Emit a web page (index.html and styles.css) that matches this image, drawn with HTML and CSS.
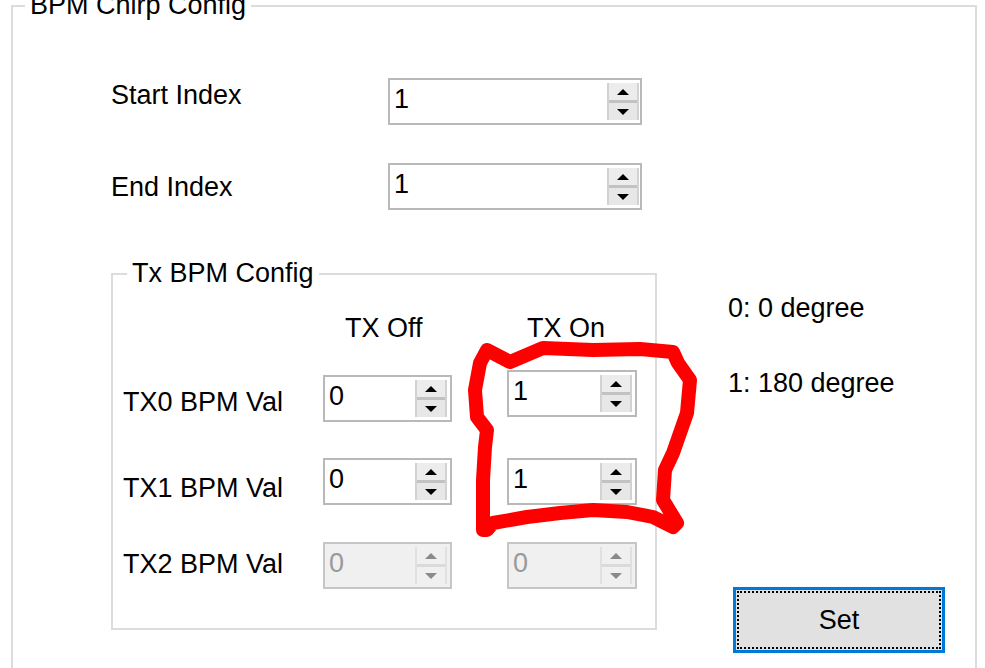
FILE: index.html
```html
<!DOCTYPE html>
<html lang="en">
<head>
    <meta charset="UTF-8">
    <meta name="viewport" content="width=device-width, initial-scale=1.0">
    <title>BPM Chirp Config</title>
    <link rel="stylesheet" href="styles.css">
</head>
<body>
    <!-- Outer group box -->
    <fieldset class="group group-main">
        <legend>BPM Chirp Config</legend>

        <div class="main-body">
            <div class="field-row row-start">
                <label class="field-label">Start Index</label>
                <div class="spin spin-wide">
                    <span class="spin-value">1</span>
                    <span class="spin-btns"><span class="spin-up"></span><span class="spin-down"></span></span>
                </div>
            </div>

            <div class="field-row row-end">
                <label class="field-label label-end">End Index</label>
                <div class="spin spin-wide">
                    <span class="spin-value">1</span>
                    <span class="spin-btns"><span class="spin-up"></span><span class="spin-down"></span></span>
                </div>
            </div>

            <div class="bottom-area">
                <!-- Tx BPM group box -->
                <fieldset class="group group-tx">
                    <legend>Tx BPM Config</legend>

                    <div class="tx-body">
                        <div class="bpm-row bpm-head">
                            <span></span>
                            <span class="head-off">TX Off</span>
                            <span class="head-on">TX On</span>
                        </div>

                        <div class="bpm-row row-tx0">
                            <span class="bpm-label">TX0 BPM Val</span>
                            <div class="spin">
                                <span class="spin-value">0</span>
                                <span class="spin-btns"><span class="spin-up"></span><span class="spin-down"></span></span>
                            </div>
                            <div class="spin spin-raised">
                                <span class="spin-value">1</span>
                                <span class="spin-btns"><span class="spin-up"></span><span class="spin-down"></span></span>
                            </div>
                        </div>

                        <div class="bpm-row row-tx1">
                            <span class="bpm-label">TX1 BPM Val</span>
                            <div class="spin">
                                <span class="spin-value">0</span>
                                <span class="spin-btns"><span class="spin-up"></span><span class="spin-down"></span></span>
                            </div>
                            <div class="spin">
                                <span class="spin-value">1</span>
                                <span class="spin-btns"><span class="spin-up"></span><span class="spin-down"></span></span>
                            </div>
                        </div>

                        <div class="bpm-row row-tx2">
                            <span class="bpm-label">TX2 BPM Val</span>
                            <div class="spin is-disabled">
                                <span class="spin-value">0</span>
                                <span class="spin-btns"><span class="spin-up"></span><span class="spin-down"></span></span>
                            </div>
                            <div class="spin is-disabled">
                                <span class="spin-value">0</span>
                                <span class="spin-btns"><span class="spin-up"></span><span class="spin-down"></span></span>
                            </div>
                        </div>
                    </div>
                </fieldset>

                <!-- Legend + Set button -->
                <div class="side">
                    <p class="side-note note-0">0: 0 degree</p>
                    <p class="side-note note-1">1: 180 degree</p>
                    <button class="set-btn">Set</button>
                </div>
            </div>
        </div>
    </fieldset>

    <!-- Red hand drawn mark over the TX On column -->
    <svg class="scribble" width="985" height="668" viewBox="0 0 985 668">
        <path d="M487,350 L510,362 L543,348 L593,350 L640,349 L673,352 L678,363 L690,380 L687,413 L673,453 L665,470 L663,500 L677,523 L673,527 L653,517 L627,512 L593,510 L560,513 L527,517 L493,523 L487,530 L483,530 L483,480 L485,447 L487,430 L477,417 L475,390 L480,363 Z"
              fill="none" stroke="#ff0000" stroke-width="14" stroke-linejoin="round" stroke-linecap="round"/>
    </svg>
</body>
</html>
```

FILE: styles.css
```css
/* Page */
html, body {
    margin: 0;
    padding: 0;
    background: #ffffff;
    overflow: hidden;
}

body {
    font-family: "Liberation Sans", Arial, sans-serif;
    font-size: 27px;
    line-height: 31px;
    color: #000000;
}

/* Group boxes */
.group {
    box-sizing: border-box;
    margin: 0;
    padding: 0;
    border: 2px solid #dcdcdc;
    min-width: 0;
}

.group legend {
    padding: 0 5px;
    line-height: 31px;
}

.group-main {
    width: 966px;
    height: 720px;
    margin: -10px 0 0 11px;
    border-bottom: none;
}

.group-main > legend {
    margin-left: 12px;
}

.main-body {
    padding-left: 98px;
}

.group-tx {
    width: 546px;
}

.group-tx > legend {
    margin-left: 14px;
}

.tx-body {
    padding: 0 0 39px 10px;
}

/* Index rows */
.field-row {
    display: flex;
    align-items: flex-start;
    height: 47px;
}

.row-start {
    margin-top: 57px;
}

.row-end {
    margin-top: 38px;
}

.field-label {
    width: 277px;
    margin-top: 2px;
}

.label-end {
    margin-top: 9px;
}

/* Spin boxes */
.spin {
    box-sizing: border-box;
    width: 129px;
    height: 47px;
    border: 2px solid #b9b9b9;
    background: #ffffff;
    display: flex;
    align-items: center;
    justify-content: space-between;
    padding: 0 3px 0 4px;
}

.spin-wide {
    width: 254px;
    padding-right: 1px;
}

.spin-value {
    align-self: flex-start;
    margin-top: 4px;
}

.spin-btns {
    box-sizing: border-box;
    width: 32px;
    height: 37px;
    display: flex;
    flex-direction: column;
    border: 2px solid #d2d2d2;
    border-top: none;
    border-bottom: none;
    background: #e7e7e7;
}

.spin-up,
.spin-down {
    flex: 1;
    display: flex;
    align-items: center;
    justify-content: center;
}

.spin-up {
    background: #ececec;
    border-bottom: 3px solid #c2c2c2;
}

.spin-up::before {
    content: "";
    border-left: 6px solid transparent;
    border-right: 6px solid transparent;
    border-bottom: 6px solid #000000;
}

.spin-down::before {
    content: "";
    border-left: 6px solid transparent;
    border-right: 6px solid transparent;
    border-top: 6px solid #000000;
}

.spin.is-disabled {
    background: #f0f0f0;
    border-color: #c6c6c6;
    color: #9a9a9a;
}

.is-disabled .spin-btns,
.is-disabled .spin-up {
    background: #f0f0f0;
}

.is-disabled .spin-up {
    border-bottom-color: #dadada;
}

.is-disabled .spin-btns {
    border-color: #e0e0e0;
}

.is-disabled .spin-up::before {
    border-bottom-color: #8a8a8a;
}

.is-disabled .spin-down::before {
    border-top-color: #8a8a8a;
}

/* Tx BPM grid */
.bottom-area {
    display: flex;
    align-items: flex-start;
    margin-top: 48px;
}

.bpm-row {
    display: grid;
    grid-template-columns: 200px 184px 130px;
    align-items: start;
}

.bpm-row .spin:last-child {
    width: 130px;
}

.bpm-head {
    margin-top: 24px;
}

.head-off {
    padding-left: 22px;
}

.head-on {
    padding-left: 20px;
}

.row-tx0 {
    margin-top: 31px;
}

.row-tx0 .bpm-label {
    margin-top: 12px;
}

.spin-raised {
    margin-top: -5px;
}

.row-tx1 {
    margin-top: 36px;
}

.row-tx1 .bpm-label {
    margin-top: 15px;
}

.row-tx2 {
    margin-top: 37px;
}

.row-tx2 .bpm-label {
    margin-top: 7px;
}

/* Right side */
.side {
    margin-left: 71px;
}

.side-note {
    margin: 0;
}

.note-0 {
    margin-top: 35px;
}

.note-1 {
    margin-top: 44px;
}

.set-btn {
    display: block;
    box-sizing: border-box;
    width: 212px;
    height: 66px;
    margin: 188px 0 0 5px;
    padding: 0;
    font-family: inherit;
    font-size: 27px;
    color: #000000;
    background: #e1e1e1;
    border: 3px solid #0078d7;
    outline: 2px dotted #000000;
    outline-offset: -6px;
}

/* Annotation overlay */
.scribble {
    position: absolute;
    top: 0;
    left: 0;
    pointer-events: none;
}
```
